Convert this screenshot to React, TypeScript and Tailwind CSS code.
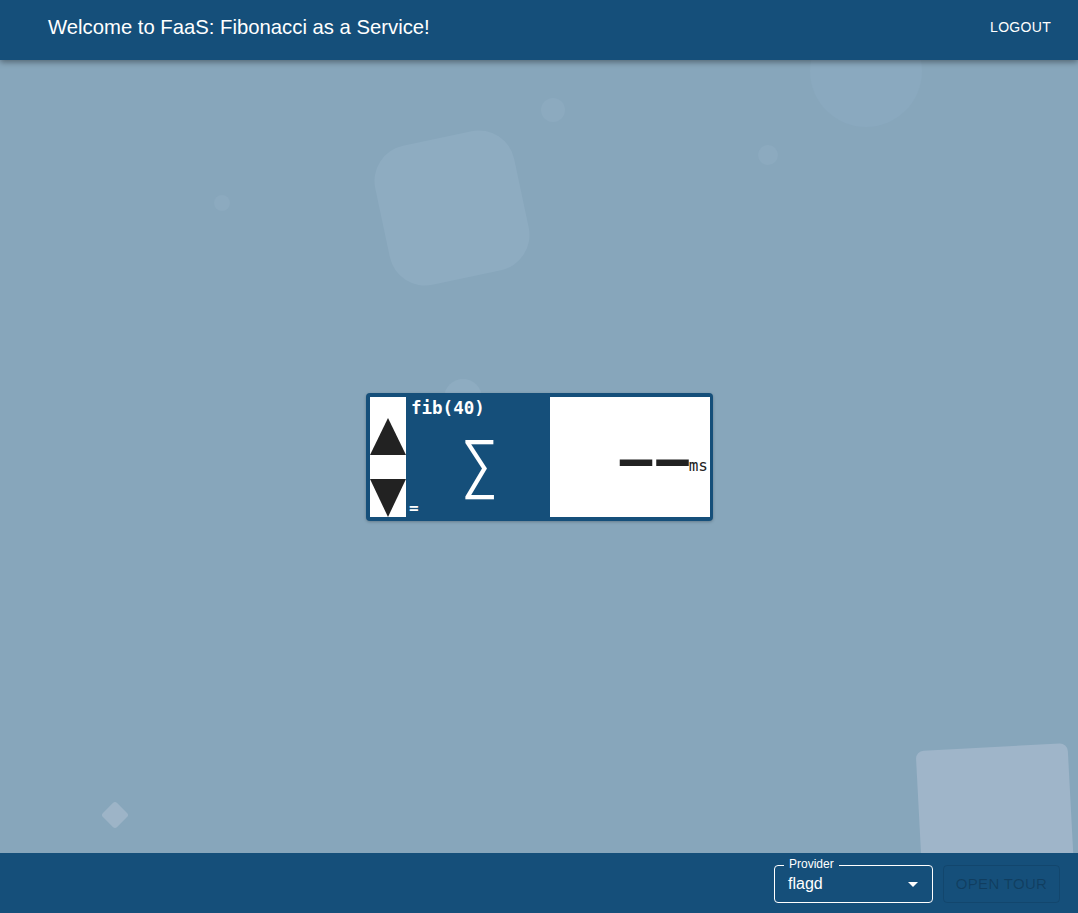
import React from 'react';

const Shapes: React.FC = () => (
  <div className="pointer-events-none absolute inset-0 overflow-hidden">
    {/* big rounded square */}
    <div className="absolute left-[381px] top-[77px] h-[142px] w-[142px] rotate-[-12deg] rounded-[36px] bg-[#8eacc1]" />
    {/* top right circle (partly under header) */}
    <div className="absolute left-[810px] top-[-45px] h-[112px] w-[112px] rounded-full bg-[#8aa9bf]" />
    {/* small circles */}
    <div className="absolute left-[541px] top-[38px] h-[24px] w-[24px] rounded-full bg-[#8caabf]" />
    <div className="absolute left-[758px] top-[85px] h-[20px] w-[20px] rounded-full bg-[#8caabf]" />
    <div className="absolute left-[214px] top-[135px] h-[16px] w-[16px] rounded-full bg-[#8caabf]" />
    <div className="absolute left-[444px] top-[319px] h-[38px] w-[38px] rounded-full bg-[#8eacc1]" />
    {/* diamond */}
    <div className="absolute left-[105px] top-[745px] h-[20px] w-[20px] rotate-45 rounded-[3px] bg-[#9db4c7]" />
    {/* bottom right square */}
    <div className="absolute left-[920px] top-[687px] h-[170px] w-[152px] rotate-[-3deg] rounded-[8px] bg-[#9fb5c9]" />
  </div>
);

const FibWidget: React.FC = () => (
  <div className="relative flex h-[128px] w-[347px] rounded-[4px] bg-[#154f7a] p-[4px] pr-[3px] shadow-[0_1px_3px_rgba(0,0,0,0.25)]">
    <div className="flex w-[36px] flex-col justify-between bg-white pt-[21px]">
      <svg width="36" height="37" viewBox="0 0 36 37">
        <polygon points="18,0 36,37 0,37" fill="#222" />
      </svg>
      <svg width="36" height="38" viewBox="0 0 36 38">
        <polygon points="0,0 36,0 18,38" fill="#222" />
      </svg>
    </div>
    <div className="relative w-[144px] font-['DejaVu_Sans_Mono',monospace] text-white">
      <div className="absolute left-[5px] top-[-1px] text-[17.5px] font-bold leading-[24px]">fib(40)</div>
      <div className="absolute left-[55px] top-[33px] text-[62px] leading-[70px]">∑</div>
      <div className="absolute bottom-[1px] left-[3px] text-[16px] font-bold leading-[16px]">=</div>
    </div>
    <div className="flex w-[160px] items-center justify-end bg-white pr-[2px] font-['DejaVu_Sans_Mono',monospace] text-[#222]">
      <span className="mt-[6px] text-[54px] font-bold leading-none">
        <span className="mr-[4px]">—</span>
        <span className="mr-[0px]">—</span>
      </span>
      <span className="mt-[18px] text-[16px] leading-none">ms</span>
    </div>
  </div>
);

const App: React.FC = () => {
  return (
    <div className="flex h-[913px] w-full flex-col bg-[#87a6bb] font-['Liberation_Sans',Arial,sans-serif]">
      <header className="relative z-20 flex h-[60px] shrink-0 items-center justify-between bg-[#154f7a] pb-[5px] pl-[48px] pr-[27px] shadow-[0_2px_6px_rgba(0,0,0,0.4)]">
        <h1 className="text-[20.3px] leading-none text-white">Welcome to FaaS: Fibonacci as a Service!</h1>
        <button className="text-[14px] font-medium uppercase tracking-[0.3px] text-white">Logout</button>
      </header>

      <main className="relative flex flex-1 items-center justify-center">
        <Shapes />
        <div className="relative z-10 ml-[1px] mt-[1px]">
          <FibWidget />
        </div>
      </main>

      <footer className="relative z-20 flex h-[60px] shrink-0 items-center justify-end gap-[10px] bg-[#154f7a] pr-[18px]">
        <div className="relative mt-[2px] flex h-[38px] w-[159px] items-center rounded-[4px] border border-white pl-[13px] pr-[14px]">
          <span className="absolute left-[9px] top-[-9px] bg-[#154f7a] px-[5px] text-[12px] leading-[14px] text-white">Provider</span>
          <span className="flex-1 text-[16px] text-white">flagd</span>
          <svg width="10" height="5" viewBox="0 0 10 5">
            <polygon points="0,0 10,0 5,5" fill="#fff" />
          </svg>
        </div>
        <button
          disabled
          className="mt-[2px] flex h-[38px] w-[117px] items-center justify-center rounded-[4px] border border-[rgba(0,0,0,0.1)] text-[15px] font-medium uppercase tracking-[0.3px] text-[rgba(0,0,0,0.22)]"
        >
          Open tour
        </button>
      </footer>
    </div>
  );
};

export default App;
